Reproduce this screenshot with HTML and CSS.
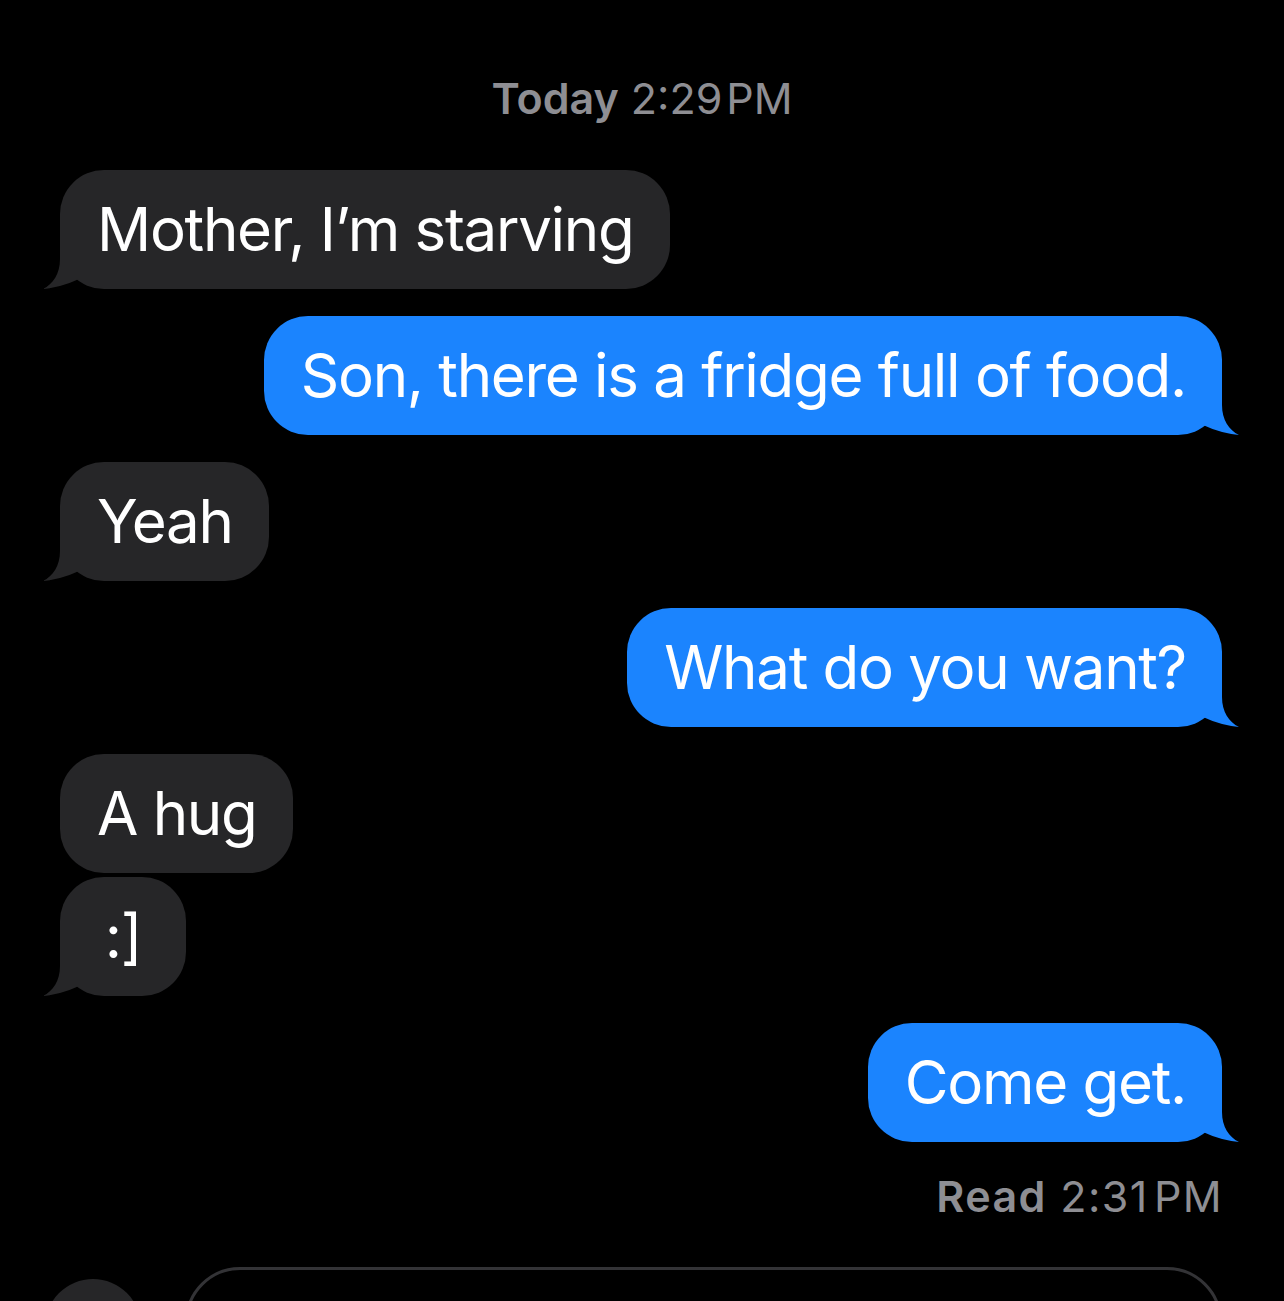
FILE: index.html
```html
<!DOCTYPE html>
<html lang="en">
<head>
<meta charset="utf-8">
<title>Messages</title>
<link rel="stylesheet" href="styles.css">
</head>
<body>
<div class="chat">
  <div class="stamp"><span class="strong">Today</span> 2:29&#8202;PM</div>
  <div class="msgs">
    <div class="row in"><div class="bubble">Mother, I’m starving<svg class="tail" viewBox="-17 -48 40 48" width="40" height="48"><path d="M0,-48 L0,-30 C0,-15 -7,-5 -17,0 Q2,-2 19,-10 L19,-48 Z"/></svg></div></div>
    <div class="row out"><div class="bubble">Son, there is a fridge full of food.<svg class="tail" viewBox="-17 -48 40 48" width="40" height="48"><path d="M0,-48 L0,-30 C0,-15 -7,-5 -17,0 Q2,-2 19,-10 L19,-48 Z"/></svg></div></div>
    <div class="row in"><div class="bubble">Yeah<svg class="tail" viewBox="-17 -48 40 48" width="40" height="48"><path d="M0,-48 L0,-30 C0,-15 -7,-5 -17,0 Q2,-2 19,-10 L19,-48 Z"/></svg></div></div>
    <div class="row out"><div class="bubble">What do you want?<svg class="tail" viewBox="-17 -48 40 48" width="40" height="48"><path d="M0,-48 L0,-30 C0,-15 -7,-5 -17,0 Q2,-2 19,-10 L19,-48 Z"/></svg></div></div>
    <div class="row in"><div class="bubble">A hug</div></div>
    <div class="row in tight"><div class="bubble short">:]<svg class="tail" viewBox="-17 -48 40 48" width="40" height="48"><path d="M0,-48 L0,-30 C0,-15 -7,-5 -17,0 Q2,-2 19,-10 L19,-48 Z"/></svg></div></div>
    <div class="row out"><div class="bubble">Come get.<svg class="tail" viewBox="-17 -48 40 48" width="40" height="48"><path d="M0,-48 L0,-30 C0,-15 -7,-5 -17,0 Q2,-2 19,-10 L19,-48 Z"/></svg></div></div>
  </div>
  <div class="read"><span class="strong">Read</span> 2:31&#8202;PM</div>
  <div class="composer">
    <div class="plus"></div>
    <div class="field"></div>
  </div>
</div>
</body>
</html>
```
FILE: styles.css
```css
html, body {
  margin: 0;
  padding: 0;
  background: #000;
  height: 1301px;
  overflow: hidden;
}
.chat {
  font-family: Inter, "Noto Sans", "Liberation Sans", sans-serif;
  color: #fff;
  padding: 0 62px 0 60px;
}
.stamp {
  text-align: center;
  color: #8e8e93;
  font-size: 43px;
  line-height: 52px;
  padding-top: 72px;
  margin-left: 2px;
}
.strong { font-weight: 600; }
.msgs {
  display: flex;
  flex-direction: column;
  margin-top: 46px;
}
.row { display: flex; margin-top: 27px; }
.row:first-child { margin-top: 0; }
.row.tight { margin-top: 4px; }
.row.in { justify-content: flex-start; }
.row.out { justify-content: flex-end; }
.bubble {
  position: relative;
  height: 119px;
  line-height: 119px;
  font-size: 60px;
  letter-spacing: -1.3px;
  padding: 0 36px 0 37px;
  border-radius: 44px;
  white-space: nowrap;
}
.bubble.short {
  min-width: 126px;
  padding: 0;
  box-sizing: border-box;
  text-align: center;
}
.in .bubble { background: #262628; }
.out .bubble { background: #1b84fe; }
.tail {
  position: absolute;
  bottom: 0;
  display: block;
}
.in .tail { left: -17px; }
.in .tail path { fill: #262628; }
.out .tail { right: -17px; transform: scaleX(-1); }
.out .tail path { fill: #1b84fe; }
.read {
  text-align: right;
  color: #8e8e93;
  font-size: 43px;
  line-height: 52px;
  letter-spacing: 1.4px;
  margin-top: 28px;
  margin-right: -1px;
}
.composer {
  display: flex;
  align-items: flex-start;
  margin-top: 45px;
  margin-left: -15px;
  gap: 44px;
}
.plus {
  width: 96px;
  height: 96px;
  border-radius: 50%;
  background: #262628;
  margin-top: 12px;
  flex: none;
}
.field {
  flex: 1;
  height: 110px;
  border: 3px solid #333336;
  border-radius: 56px;
  box-sizing: border-box;
}
```
